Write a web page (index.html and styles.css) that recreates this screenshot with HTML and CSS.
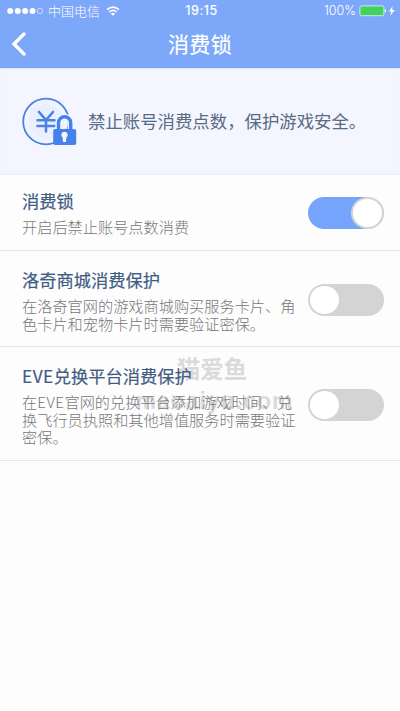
FILE: index.html
```html
<!DOCTYPE html>
<html lang="zh-CN">
<head>
<meta charset="utf-8">
<title>消费锁</title>
<link rel="stylesheet" href="styles.css">
</head>
<body>
<header class="top">
  <div class="status">
    <div class="carrier">
      <svg width="37" height="8" viewBox="0 0 37 8"><g fill="#fff"><circle cx="3.2" cy="4" r="3"/><circle cx="10.7" cy="4" r="3"/><circle cx="18.1" cy="4" r="3"/><circle cx="25.5" cy="4" r="3"/></g><circle cx="33" cy="4" r="2.7" fill="none" stroke="#fff" stroke-width=".6"/></svg>
      <span>中国电信</span>
      <svg class="wifi" width="14" height="10" viewBox="0 0 14 10" fill="none" stroke="#fff" stroke-width="1.6"><path d="M1 3.6Q7-1.5 13 3.6M3.2 6Q7 2.8 10.8 6"/><path d="M4.8 7.5Q7 5.8 9.2 7.5L7 9.8Z" fill="#fff" stroke="none"/></svg>
    </div>
    <div class="time">19:15</div>
    <div class="power">
      <span>100%</span>
      <svg width="37" height="12" viewBox="0 0 37 12"><rect x=".9" y=".9" width="24" height="9.8" rx="1.6" fill="#43d35c" stroke="#dfe9ff" stroke-width=".9"/><path d="M25.8 4v3.6q1.4-.4 1.4-1.8T25.8 4Z" fill="#fff"/><path d="M33.5 1 30 6.5h2.4L31 10.8 36 5h-2.7Z" fill="#fff"/></svg>
    </div>
  </div>
  <div class="nav">
    <svg class="back" width="16" height="26" viewBox="0 0 16 26"><path d="M13 3 3 13 13 23" fill="none" stroke="#fff" stroke-width="3.4" stroke-linecap="round"/></svg>
    <h1>消费锁</h1>
  </div>
</header>
<section class="banner">
  <svg width="56" height="50" viewBox="0 0 56 50">
    <circle cx="24" cy="24.5" r="22.8" fill="#f1f4ff" stroke="#4c82e6" stroke-width="1.8"/>
    <circle cx="24" cy="24.5" r="17.5" fill="#e9effd"/>
    <path d="M17 15l7 8 7-8M24 23v11.5M15.5 23.3h17M15.5 29h17" fill="none" stroke="#4c82e6" stroke-width="2.6" stroke-linecap="round"/>
    <path d="M36.5 34v-8.2a6.1 6.1 0 0 1 12.2 0V34" fill="none" stroke="#f3f5ff" stroke-width="6"/>
    <path d="M36.5 34v-8.2a6.1 6.1 0 0 1 12.2 0V34" fill="none" stroke="#4680eb" stroke-width="3.4"/>
    <rect x="31.2" y="32" width="23" height="16" rx="2" fill="#4680eb"/>
    <path d="M42.5 34.7a3.2 3.2 0 0 1 1.9 5.8L44 45h-3l-.4-4.5a3.2 3.2 0 0 1 1.9-5.8Z" fill="#f3f5ff"/>
  </svg>
  <p>禁止账号消费点数，保护游戏安全。</p>
</section>
<main class="list">
  <div class="row row-lock">
    <div class="info"><h2>消费锁</h2><p>开启后禁止账号点数消费</p></div>
    <div class="switch on"><i></i></div>
  </div>
  <div class="row row-mall">
    <div class="info"><h2>洛奇商城消费保护</h2><p>在洛奇官网的游戏商城购买服务卡片、角色卡片和宠物卡片时需要验证密保。</p></div>
    <div class="switch"><i></i></div>
  </div>
  <div class="row row-eve">
    <div class="mark"><span>猫爱鱼</span><b>maoaiyu.com</b></div>
    <div class="info"><h2><span class="latin">EVE</span>兑换平台消费保护</h2><p>在<span class="latin">EVE</span>官网的兑换平台添加游戏时间、兑<br>换飞行员执照和其他增值服务时需要验证密保。</p></div>
    <div class="switch"><i></i></div>
  </div>
</main>
</body>
</html>
```

FILE: styles.css
```css
* { box-sizing: border-box; margin: 0; padding: 0; }
body { height: 711px; background: #fdfdfe; font-family: "Noto Sans CJK SC", sans-serif; overflow: hidden; }
svg { display: block; flex: none; }
.top { height: 68px; background: #7da7f8; color: #fff; }
.status { display: grid; grid-template-columns: 1fr 40px 1fr; height: 22px; align-items: center; font-size: 12.5px; line-height: 20px; padding: 0 4px 0 7px; }
.carrier, .power { display: flex; align-items: center; }
.carrier span { margin-left: 4px; font-weight: 300; font-size: 13px; }
.wifi { margin-left: 6px; }
.time { font-family: Inter, sans-serif; font-weight: 500; text-align: center; letter-spacing: .5px; }
.power { justify-content: flex-end; gap: 3px; font-family: Inter, sans-serif; font-weight: 300; }
.nav { display: grid; grid-template-columns: 40px 1fr 40px; align-items: center; height: 44px; }
.back { margin-left: 11px; }
h1 { font-size: 21px; line-height: 30px; font-weight: 400; text-align: center; letter-spacing: .3px; position: relative; top: -1px; -webkit-text-stroke: .2px #fff; }
.banner { height: 107px; border-top: 1px solid #dde6fa; background: #f4f5ff; display: flex; align-items: center; padding-left: 22px; box-shadow: inset 0 -3px 4px -2px #e6e9f7; }
.banner p { margin: 0 0 2px 10px; font-size: 17.4px; line-height: 26px; color: #566b84; white-space: nowrap; }
.row { position: relative; display: flex; justify-content: space-between; padding: 0 16px 0 22px; border-bottom: 1px solid #e5e6f0; }
.row-lock { height: 76px; padding-top: 13px; }
.row-mall { height: 96px; padding-top: 16px; }
.row-eve { height: 114px; padding-top: 16px; }
.info { position: relative; width: 276px; }
h2 { font-size: 17.25px; line-height: 25px; font-weight: 400; color: #3f5c82; white-space: nowrap; -webkit-text-stroke: .2px #3f5c82; }
.latin { letter-spacing: .5px; }
.info p { font-size: 15.2px; line-height: 17.6px; font-weight: 300; color: #777; margin-top: 5px; }
.switch { flex: none; width: 76px; height: 32px; border-radius: 16px; background: #d4d4d4; padding: 2px; margin-top: 17px; }
.row-lock .switch { margin-top: 9px; }
.row-eve .switch { margin-top: 26px; }
.switch i { display: block; width: 29px; height: 28px; border-radius: 50%; background: #fff; }
.switch.on { background: linear-gradient(90deg, #74a4fc 60px, #d4d4d4 60px); }
.switch.on i { margin-left: 43px; box-shadow: 0 0 0 2px #d4d4d4; }
.mark { position: absolute; left: 132px; top: 6px; width: 160px; text-align: center; color: #dadadc; font-weight: 700; }
.mark span { display: block; font-size: 23.5px; line-height: 30px; }
.mark b { display: block; font: 700 23px/30px "Liberation Sans", sans-serif; letter-spacing: 1px; margin: 3px -5px 0 0; }
```
